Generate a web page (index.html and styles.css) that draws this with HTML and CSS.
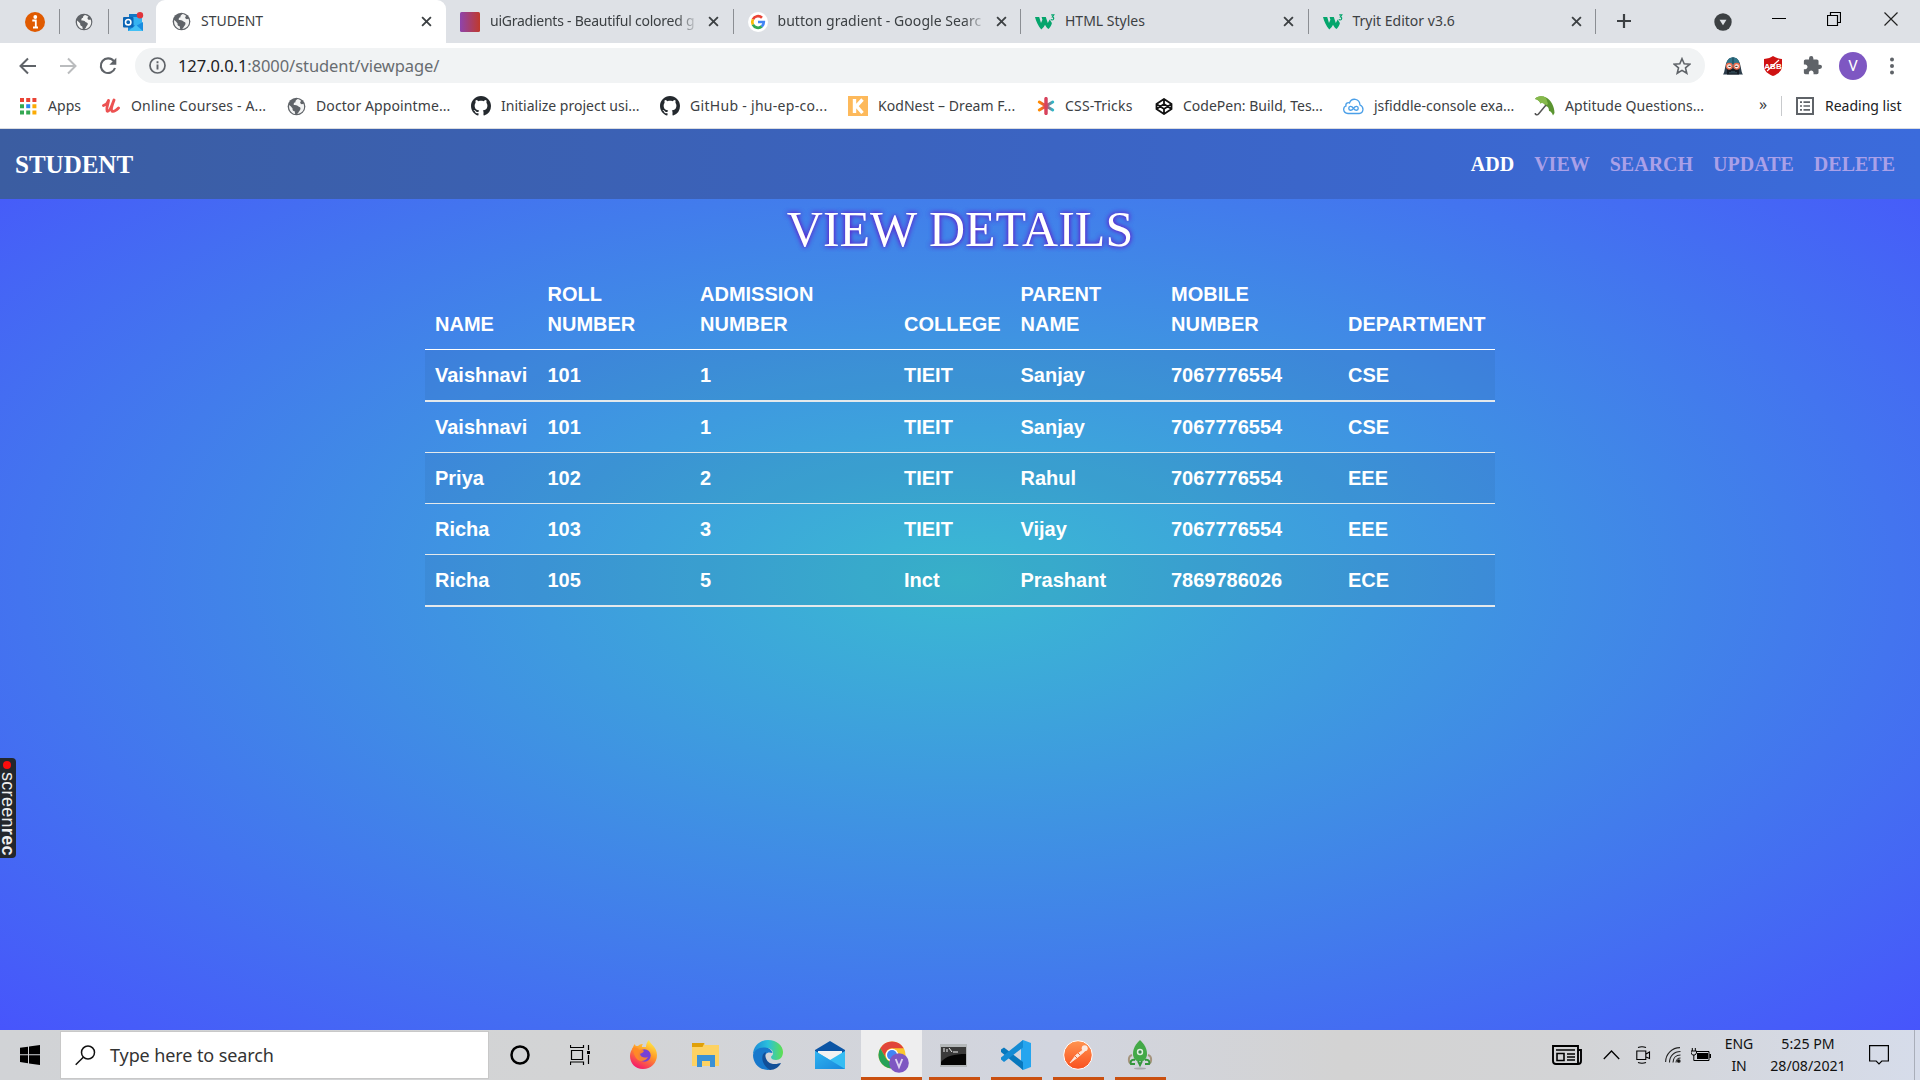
FILE: index.html
```html
<!DOCTYPE html>
<html lang="en">
<head>
<meta charset="utf-8">
<title>STUDENT</title>
<link rel="stylesheet" href="styles.css">
</head>
<body>
<svg width="0" height="0" class="defs">
  <defs>
    <linearGradient id="gUi"><stop offset="0" stop-color="#8e44ad"/><stop offset="1" stop-color="#c0392b"/></linearGradient>
    <linearGradient id="gStar"><stop offset="0" stop-color="#ff8a00"/><stop offset=".5" stop-color="#d9415d"/><stop offset="1" stop-color="#2bb8c9"/></linearGradient>
    <linearGradient id="gFox" x1=".8" y1="0" x2=".3" y2="1"><stop offset="0" stop-color="#fff14a"/><stop offset=".45" stop-color="#ff9a28"/><stop offset="1" stop-color="#f5156c"/></linearGradient>
    <linearGradient id="gEdge"><stop offset="0" stop-color="#1a8ad8"/><stop offset=".5" stop-color="#2bc0dc"/><stop offset="1" stop-color="#5fe04e"/></linearGradient>
    <linearGradient id="gMail" x1="0" y1="0" x2="1" y2="1"><stop offset="0" stop-color="#2fb4f0"/><stop offset="1" stop-color="#1787dc"/></linearGradient>
    <linearGradient id="gPost" x1="0" y1="0" x2="0" y2="1"><stop offset="0" stop-color="#ff9550"/><stop offset="1" stop-color="#f9501f"/></linearGradient>
    <symbol id="close" viewBox="0 0 12 12"><path d="M1.2 1.2l9.6 9.6M10.8 1.2l-9.6 9.6" stroke="#3c4043" stroke-width="2" fill="none"/></symbol>
    <symbol id="globe" viewBox="0 0 20 20"><circle cx="10" cy="10" r="9.3" fill="#5f6368"/><path d="M11.2 2.2C9.400 3 8.600 4.200 9 5.400 7.200 5.600 6.800 6.800 7.200 8.400c1.800.2 3.400.2 4.200 1.200.8 1 2.600.8 2.800 2.200.2 2-1.600 2.600-2.200 4.600-.2.700-.8 1.100-1.400 1.500 4.400-.2 7.400-3.600 7.400-7.600 0-1.200-.2-2.200-.7-3.200-1.200.6-2.300.6-3-.2-.7-1-.5-1.700.7-2.600-1-1-2.300-1.800-3.800-2.100zM2.300 8.300c-.8 4.600 2.200 8.900 6.200 9.500.3-1.200-.4-1.700-.4-2.900-1.700-.2-2.500-1-2.300-3.100-1-1.200-2.100-2.700-3.500-3.500z" fill="#fff" opacity=".92"/></symbol>
    <symbol id="github" viewBox="0 0 16 16"><path fill="#24292e" d="M8 0C3.580 0 0 3.580 0 8c0 3.540 2.290 6.530 5.470 7.590.4.070.55-.17.55-.38 0-.19-.01-.82-.01-1.490-2.010.37-2.530-.49-2.690-.94-.09-.23-.48-.94-.82-1.130-.28-.15-.68-.52-.01-.53.63-.01 1.080.58 1.230.82.72 1.210 1.870.87 2.330.66.07-.52.28-.87.51-1.070-1.780-.2-3.640-.89-3.640-3.950 0-.87.31-1.590.82-2.150-.08-.2-.36-1.020.08-2.120 0 0 .67-.21 2.200.82.64-.18 1.320-.27 2-.27s1.360.09 2 .27c1.530-1.040 2.200-.82 2.200-.82.44 1.100.16 1.920.08 2.120.51.56.82 1.270.82 2.150 0 3.070-1.870 3.750-3.650 3.950.29.25.54.73.54 1.480 0 1.070-.01 1.930-.01 2.200 0 .21.15.46.55.38A8.010 8.010 0 0016 8c0-4.420-3.580-8-8-8z"/></symbol>
    <symbol id="w3" viewBox="0 0 20 16"><path d="M0 3h4.200l1.800 6 1.400-3.200L6.600 3h4.200l2 6 1.900-3.500 2.200 3.500c-.3 2-1.500 4-3.300 6-1.600-1-2.700-2.400-3.600-4.300C9.300 12.300 8 14 6.300 15.400 3.200 12 1 7.500 0 3z" fill="#04a56c"/><path d="M16.200 .8h2.600L17.400 3c1.800 0 1.700 3-.2 3-.6 0-1-.2-1.300-.7" fill="none" stroke="#04a56c" stroke-width="1.200"/></symbol>
  </defs>
</svg>

<div class="screen">
  <div class="tabstrip">
    <div class="pins">
      <div class="pin"><svg width="20" height="20" viewBox="0 0 20 20"><circle cx="10" cy="10" r="10" fill="#e05a00"/><circle cx="10.300" cy="5" r="1.900" fill="#fff"/><path d="M7.300 8.500h3.500v6.300M8 15.500h5" stroke="#fff" stroke-width="1.800" fill="none"/></svg></div>
      <div class="pin"><svg width="18" height="18"><use href="#globe"/></svg></div>
      <div class="pin"><svg width="21" height="20" viewBox="0 0 21 20"><path d="M6 2h9v8H6z" fill="#1278c6"/><path d="M10 5h9v9h-9z" fill="#35b3f1"/><path d="M5 10l8 4 7-4v9H5z" fill="#1a8de0"/><path d="M5 19l8-6 7 6z" fill="#42c0f5"/><rect y="5" width="10.500" height="10.500" rx="1" fill="#0b64b5"/><circle cx="5.200" cy="10.200" r="2.700" fill="none" stroke="#fff" stroke-width="1.600"/><circle cx="17" cy="3.200" r="3.200" fill="#e0343b"/></svg></div>
    </div>
    <div class="tab active"><svg class="fav" width="19" height="19"><use href="#globe"/></svg><span class="title">STUDENT</span><svg class="x" width="11" height="11"><use href="#close"/></svg></div>
    <div class="tab"><svg class="fav" width="20" height="20"><rect width="20" height="20" rx="1.500" fill="url(#gUi)"/></svg><span class="title fade">uiGradients - Beautiful colored g</span><svg class="x" width="11" height="11"><use href="#close"/></svg></div>
    <div class="tab"><svg class="fav" width="20" height="20" viewBox="0 0 20 20"><circle cx="10" cy="10" r="10" fill="#fff"/><g fill="none" stroke-width="2.700"><path d="M4.900 7.400A5.800 5.800 0 0 1 14 5.700" stroke="#ea4335"/><path d="M4.900 12.600a5.800 5.800 0 0 1 0-5.200" stroke="#fbbc05"/><path d="M13.800 14.400a5.800 5.800 0 0 1-8.900-1.800" stroke="#34a853"/><path d="M10 10h5.800a5.800 5.800 0 0 1-2 4.400" stroke="#4285f4"/></g></svg><span class="title fade goog">button gradient - Google Searc</span><svg class="x" width="11" height="11"><use href="#close"/></svg></div>
    <div class="tab"><svg class="fav" width="20" height="16"><use href="#w3"/></svg><span class="title">HTML Styles</span><svg class="x" width="11" height="11"><use href="#close"/></svg></div>
    <div class="tab"><svg class="fav" width="20" height="16"><use href="#w3"/></svg><span class="title">Tryit Editor v3.6</span><svg class="x" width="11" height="11"><use href="#close"/></svg></div>
    <svg class="plus" width="16" height="16"><path d="M8 1v14M1 8h14" stroke="#3c4043" stroke-width="2.200"/></svg>
    <div class="winctl">
      <svg width="18" height="18"><circle cx="9" cy="9" r="8.700" fill="#3c4043"/><path d="M5.500 6.700h7L9 12.300z" fill="#dee1e6"/></svg>
      <svg width="14" height="14"><path d="M0 6.500h14" stroke="#000"/></svg>
      <svg width="14" height="14"><path d="M.5 3.500h10v10H.5zM3.500 3.500v-3h10v10h-3" fill="none" stroke="#000" stroke-width="1.200"/></svg>
      <svg width="14" height="14"><path d="M.5 .5l13 13M13.500 .5l-13 13" stroke="#222" stroke-width="1.200"/></svg>
    </div>
  </div>

  <div class="toolbar">
    <div class="navbtns">
      <svg width="18" height="18" viewBox="0 0 18 18" fill="none" stroke="#5f6368" stroke-width="2"><path d="M17 9H2M9 1.500L1.500 9 9 16.500"/></svg>
      <svg width="18" height="18" viewBox="0 0 18 18" fill="none" stroke="#babcbe" stroke-width="2"><path d="M1 9h15M9 1.500L16.500 9 9 16.500"/></svg>
      <svg width="18" height="18" viewBox="0 0 18 18"><path d="M14.800 4.200A7.300 7.300 0 1 0 16 11" fill="none" stroke="#5f6368" stroke-width="2.100"/><path d="M17.300.8v7h-7z" fill="#5f6368"/></svg>
    </div>
    <div class="omni">
      <svg width="17" height="17" viewBox="0 0 17 17"><circle cx="8.500" cy="8.500" r="7.500" fill="none" stroke="#5f6368" stroke-width="1.700"/><path d="M8.500 7.500v5M8.500 4.300v1.900" stroke="#5f6368" stroke-width="1.900"/></svg>
      <span class="url"><b>127.0.0.1</b>:8000/student/viewpage/</span>
      <svg width="18" height="18" viewBox="0 0 18 18"><path d="M9 1.700l2.200 5.100 5.500.5-4.200 3.600 1.300 5.400L9 13.400l-4.800 2.900 1.300-5.400L1.300 7.300l5.500-.5z" fill="none" stroke="#5f6368" stroke-width="1.600"/></svg>
    </div>
    <div class="exts">
      <svg width="20" height="20" viewBox="0 0 20 20"><path d="M0 18.500C3 15 1 1.500 10 1.500s7 13.500 10 17z" fill="#2d3e4c"/><path d="M3.500 9C3.500 4 6 1.500 10 1.500S16.500 4 16.500 9z" fill="#2f7489"/><path d="M9 1.500h2V8H9z" fill="#255a6c"/><path d="M4 13h12v5.500H4z" fill="#151c24"/><circle cx="6.300" cy="10.300" r="2.800" fill="#fff3ee" stroke="#ee6c4c" stroke-width="1.300"/><circle cx="13.700" cy="10.300" r="2.800" fill="#fff3ee" stroke="#ee6c4c" stroke-width="1.300"/><path d="M5.500 10.300h2.200M12.300 10.300h2.200" stroke="#444" stroke-width="1.300"/><path d="M7 16v1.500M9 15v2.500M11 15v2.500M13 16v1.500" stroke="#456877"/></svg>
      <svg width="20" height="20" viewBox="0 0 20 20"><path d="M10 0c2 1.500 5 2.500 9 3V10c0 5-4 8-9 10-5-2-9-5-9-10V3c4-.5 7-1.500 9-3z" fill="#cf1212"/><text x="10" y="12.800" class="abp">ABB</text><path d="M4 15L16 4" stroke="#fff" stroke-width="1.200"/></svg>
      <svg class="puzzle" width="19" height="19" viewBox="1 1 22 22"><path fill="#5f6368" d="M20.500 11H19V7c0-1.100-.9-2-2-2h-4V3.500a2.500 2.500 0 0 0-5 0V5H4c-1.100 0-1.990.9-1.990 2v3.800H3.500c1.490 0 2.700 1.210 2.700 2.700s-1.210 2.700-2.700 2.700H2V20c0 1.100.9 2 2 2h3.800v-1.500c0-1.490 1.210-2.700 2.700-2.700s2.700 1.210 2.700 2.700V22H17c1.100 0 2-.9 2-2v-4h1.500a2.500 2.500 0 0 0 0-5z"/></svg>
      <span class="avatar">V</span>
      <svg width="6" height="18" fill="#5f6368"><circle cx="3" cy="2.500" r="2"/><circle cx="3" cy="9" r="2"/><circle cx="3" cy="15.500" r="2"/></svg>
    </div>
  </div>

  <div class="bookmarks">
    <a class="bm apps"><svg width="17" height="17"><g fill="#ea4335"><path d="M0 0h4v4H0zM6.200 0h4v4H6.200z"/><path d="M12.400 0h4v4h-4z"/></g><path d="M0 6.200h4v4H0zM0 12.400h4v4H0zM6.200 12.400h4v4H6.200z" fill="#34a853"/><path d="M6.200 6.200h4v4H6.200z" fill="#2a85f5"/><path d="M12.400 6.200h4v4h-4zM12.400 12.400h4v4h-4z" fill="#fbab05"/></svg><span>Apps</span></a>
    <a class="bm udemy"><svg width="19" height="16" viewBox="0 0 19 16"><path d="M1.500 7.500C4 6.500 6 4.500 6.500 2.500 6 6 3.500 12.500 5.500 13.200 8 13.500 10.500 6 12 2c-1.500 4-3.500 10.500-1.500 11.300 2 .6 4-1.300 6-3.300" fill="none" stroke="#ec5252" stroke-width="2.900" stroke-linecap="round" stroke-linejoin="round"/></svg><span>Online Courses - A...</span></a>
    <a class="bm doctor"><svg width="19" height="19"><use href="#globe"/></svg><span>Doctor Appointme...</span></a>
    <a class="bm init"><svg width="20" height="20"><use href="#github"/></svg><span>Initialize project usi...</span></a>
    <a class="bm jhu"><svg width="20" height="20"><use href="#github"/></svg><span>GitHub - jhu-ep-co...</span></a>
    <a class="bm kod"><svg width="20" height="20"><path d="M0 0h20v20H0z" fill="#fdb95b"/><path d="M6.500 3v14M14.500 3.500L8.500 10l6 7" stroke="#fff" stroke-width="3.400" fill="none"/></svg><span>KodNest – Dream F...</span></a>
    <a class="bm tricks"><svg width="18" height="18"><path d="M9 1.500v15M2.300 5l13.400 8M15.700 5L2.300 13" stroke="url(#gStar)" stroke-width="3" stroke-linecap="round"/><path d="M9.010 1.500L9 16.500" stroke="#d9415d" stroke-width="3" stroke-linecap="round"/></svg><span>CSS-Tricks</span></a>
    <a class="bm pen"><svg width="18" height="17" viewBox="0 0 18 17"><path d="M9 1l7.500 5v5L9 16 1.500 11V6zM9 1v5M9 11v5M1.500 6L9 11l7.500-5M1.500 11L9 6l7.500 5" fill="none" stroke="#111" stroke-width="1.800"/></svg><span>CodePen: Build, Tes...</span></a>
    <a class="bm fiddle"><svg width="21" height="17" viewBox="0 0 21 17"><path d="M5 15.500C-.5 15-.2 9 3 8 2.200 5.500 5 3.800 6.500 5 8.500-.5 16.500 0 17 7c4.500 2 3.500 8.200-.8 8.500z" fill="none" stroke="#4a9fe8" stroke-width="1.300"/><path d="M10.500 10.300C8.500 7.500 5.800 8 5.800 10.300s2.700 2.800 4.700 0 4.700-2.300 4.700 0-2.700 2.800-4.700 0z" fill="none" stroke="#4a9fe8" stroke-width="1.400"/></svg><span>jsfiddle-console exa...</span></a>
    <a class="bm apt"><svg width="21" height="20" viewBox="0 0 21 20"><path d="M1 3C3 0 8-.5 12 1.500c5 2.500 8.500 9 8.500 15.500l-1.500 2.500c-1-3-2.500-4.500-4-4.500 0-3-1-4.500-3.500-5C10.500 7.500 9 6.500 6.500 7.500 5.500 5 3.500 3.500 1 3z" fill="#5a9430"/><path d="M1 3C3 0 8-.5 12 1.500L14 8l-2.500 2C10.500 7.500 9 6.500 6.500 7.500 5.500 5 3.500 3.500 1 3z" fill="#86b94b"/><path d="M12 9L4.500 18c-1.200 1.500-3.500.8-3.200-1" fill="none" stroke="#555" stroke-width="1.500"/></svg><span>Aptitude Questions...</span></a>
    <span class="more">»</span>
    <a class="reading"><svg width="18" height="18"><path d="M1 1h16v16H1z" fill="none" stroke="#5f6368" stroke-width="2"/><path d="M4 5.200h2M4 9h2M4 12.800h2M7.500 5.200H14M7.500 9H14M7.500 12.800H14" stroke="#5f6368" stroke-width="1.700"/></svg><span>Reading list</span></a>
  </div>

  <main class="page">
    <nav class="navbar">
      <a class="brand">STUDENT</a>
      <div class="links"><a class="current">ADD</a><a>VIEW</a><a>SEARCH</a><a>UPDATE</a><a>DELETE</a></div>
    </nav>
    <h1>VIEW DETAILS</h1>
    <table class="students">
      <colgroup><col class="c-name"><col class="c-roll"><col class="c-adm"><col class="c-col"><col class="c-par"><col class="c-mob"><col class="c-dep"></colgroup>
      <thead><tr><th>NAME</th><th>ROLL<br>NUMBER</th><th>ADMISSION<br>NUMBER</th><th>COLLEGE</th><th>PARENT<br>NAME</th><th>MOBILE<br>NUMBER</th><th>DEPARTMENT</th></tr></thead>
      <tbody>
        <tr class="thick"><td>Vaishnavi</td><td>101</td><td>1</td><td>TIEIT</td><td>Sanjay</td><td>7067776554</td><td>CSE</td></tr>
        <tr><td>Vaishnavi</td><td>101</td><td>1</td><td>TIEIT</td><td>Sanjay</td><td>7067776554</td><td>CSE</td></tr>
        <tr><td>Priya</td><td>102</td><td>2</td><td>TIEIT</td><td>Rahul</td><td>7067776554</td><td>EEE</td></tr>
        <tr><td>Richa</td><td>103</td><td>3</td><td>TIEIT</td><td>Vijay</td><td>7067776554</td><td>EEE</td></tr>
        <tr class="thick"><td>Richa</td><td>105</td><td>5</td><td>Inct</td><td>Prashant</td><td>7869786026</td><td>ECE</td></tr>
      </tbody>
    </table>
  </main>

  <footer class="taskbar">
    <div class="start"><svg width="20" height="20"><path d="M0 2.800L8 1.700v7.600H0zM9 1.500L20 0v9.300H9zM0 10.300h8v7.900L0 17.100zM9 10.300h11V20L9 18.400z"/></svg></div>
    <div class="search"><svg width="21" height="21"><circle cx="13" cy="7.500" r="6.500" fill="none" stroke="#111" stroke-width="1.500"/><path d="M8.300 12.200L.7 19.800" stroke="#111" stroke-width="1.500"/></svg><span>Type here to search</span></div>
    <div class="task"><svg width="20" height="20"><circle cx="10" cy="10" r="8.500" fill="none" stroke="#000" stroke-width="2.500"/></svg></div>
    <div class="task view"><svg width="21" height="20"><path d="M1.500 5.500h11v9h-11zM.5 0v2.500h13V0M.5 20v-3h13v3M18.500 0v5M18.500 10v9" fill="none" stroke="#000" stroke-width="1.200"/><path d="M17 6h3v3h-3z"/></svg></div>
    <div class="task"><svg width="30" height="30" viewBox="0 0 30 30"><path d="M4 8c0-2 1-3 2-4 0 2 1 2 3 2 2-2 4-2 5-2-1 1-1 2-1 3l4 0c0-3 1-5 3-7 1 4 8 7 8 15 0 8-6 14-14 14S1 23 1 16c0-3 1-6 3-8z" fill="url(#gFox)"/><circle cx="15.500" cy="15.500" r="6.200" fill="#7541d6"/><path d="M3 8c4-1 6 0 7 2 2-1 4 0 5 1-1 2-3 2-4 3 1 4 5 4 8 3-2 4-7 5-10 3-4-3-4-8-6-12z" fill="#ff8b26" opacity=".9"/></svg></div>
    <div class="task"><svg width="30" height="26" viewBox="0 0 30 26"><path d="M1 1h12l1 2h14v21H1z" fill="#fdd263"/><path d="M1 1h12.500l-2 4H1z" fill="#e0a008"/><path d="M6 25V13h18v12h-5v-6h-8v6z" fill="#3a91d6"/></svg></div>
    <div class="task"><svg width="30" height="30" viewBox="0 0 30 30"><path d="M15 0c9 0 15 6 15 12 0 5-3 8-7 8-3 0-5-1-5-3 0-1 2-1 2-4 0-3-3-5-7-5C7 8 1 11 0 15 0 6 7 0 15 0z" fill="url(#gEdge)"/><path d="M0 15C1 10 6 7 12 7.500c4 0 7 3 7.500 5.500-6-2-9 2-8 8 1 4 3 8 7 8.500C8 32 0 24 0 15z" fill="#1778cc"/><path d="M13 12c-5 1-6 12 4 18 5 0 9-3 11-7-2 0-4 1.500-8 1-6-1-9-7-7-12z" fill="#114f98"/></svg></div>
    <div class="task"><svg width="30" height="28" viewBox="0 0 30 28"><path d="M0 9L15 0l15 9v6H0z" fill="#0b55a5"/><path d="M3 10h24v10H3z" fill="#f2f2f2"/><path d="M0 10l15 9 15-9v18H0z" fill="#35bdf3"/><path d="M0 10l30 18H0z" fill="url(#gMail)"/></svg></div>
    <div class="task open chrome"><svg width="32" height="32" viewBox="0 0 32 32"><circle cx="15" cy="14" r="13.500" fill="#fbc62e"/><path d="M3.300 7.250A13.500 13.500 0 0 1 26.700 7.250H15a7 7 0 0 0-6 10z" fill="#e1453a"/><path d="M3.300 7.250l5.700 10a7 7 0 0 0 6 3.750l-1 6.500A13.500 13.500 0 0 1 3.300 7.250z" fill="#27a258"/><circle cx="15" cy="14" r="6.300" fill="#fff"/><circle cx="15" cy="14" r="5" fill="#4285f4"/><circle cx="22" cy="22" r="9.800" fill="#7e57c2"/><path d="M18.700 18l3.300 8 3.300-8" fill="none" stroke="#ddd1f1" stroke-width="1.900"/></svg></div>
    <div class="task open cmd"><svg width="29" height="25" viewBox="0 0 29 25"><path d="M1 1h27v23H1z" fill="#b4b8ba"/><path d="M2 4h25v18H2z" fill="#050505"/><path d="M2 4h25v7C15 11 7 13 2 19z" fill="#3a3a3a"/><path d="M4 6h2M4 8h2M8 6v3M10 5l3 4M14 9h5" stroke="#eee" stroke-width="1"/></svg></div>
    <div class="task open"><svg width="30" height="30" viewBox="0 0 30 30"><path d="M22 0l8 3v24l-8 3-2-2V2z" fill="#25a5ef"/><path d="M0 9.500L3 7.500l19 14.500v8L0 12z" fill="#0878bd"/><path d="M0 19.500L3 22l19-14.500V0L0 17.500z" fill="#148bd4"/></svg></div>
    <div class="task open"><svg width="30" height="30" viewBox="0 0 30 30"><circle cx="15" cy="15" r="14.300" fill="url(#gPost)" stroke="#fff" stroke-width="1"/><circle cx="21.700" cy="8.300" r="3" fill="#fbe9df"/><path d="M20 10l1.500 1.500-6.500 5.500-8 6 6-8z" fill="#fbe9df" stroke="#fbe9df" stroke-width=".8"/><path d="M12 16l2 2M15 13l2 2" stroke="#f26d31"/></svg></div>
    <div class="task open"><svg width="26" height="30" viewBox="0 0 26 30"><ellipse cx="13" cy="28.500" rx="6" ry="1" fill="#a9a9ad"/><path d="M5 15c-4 1-4 7-1 9M21 15c4 1 4 7 1 9" fill="none" stroke="#a5947d" stroke-width="2"/><path d="M13 0c4 4 7 8 7 14 0 4-3 7-4 7h-6c-1 0-4-3-4-7C6 8 9 4 13 0z" fill="#43a947"/><circle cx="13" cy="12" r="3.200" fill="#e0f0df"/><circle cx="13" cy="12" r="1.700" fill="#39884b"/><path d="M8 20c-4-1-5 2-4 4h4M18 20c4-1 5 2 4 4h-4M11 21l2 4 2-4" fill="none" stroke="#34963d" stroke-width="2"/></svg></div>
    <div class="tray">
      <svg class="news" width="30" height="20" viewBox="0 0 30 20" fill="none" stroke="#000"><path d="M1 1h25v18H4c-2 0-3-1-3-3zM26 5h3v11c0 2-1 3-3 3" stroke-width="1.900"/><path d="M5 8.500h7v7H5zM4 5h19M15 9h8M15 12h8M15 15h8" stroke-width="1.600"/></svg>
      <svg class="chev" width="17" height="10"><path d="M.8 9L8.500 1l7.700 8" fill="none" stroke="#000" stroke-width="1.300"/></svg>
      <svg class="meet" width="15" height="18" fill="none" stroke="#000" stroke-width="1.100"><path d="M.8 5h9v8.500h-9zM10 8l3.500-2v6.500L10 11M2 1.500Q6 0 10 1.500M2 16.500Q6 18 10 16.500"/></svg>
      <svg class="wifi" width="16" height="16" fill="none" stroke="#222" stroke-width="1.100"><path d="M.6 15C.6 7 7 .6 15 .6M4.500 15.500C4.500 9 9 4.500 15.500 4.500M8 15.500C8 11 11 8 15.500 8M11 15.500c0-2.500 2-4.500 4.500-4.500"/><circle cx="13.800" cy="14" r="1.300" fill="#000"/></svg>
      <svg class="batt" width="20" height="14"><path d="M5 3.500h13v9H4.500" fill="none" stroke="#000"/><path d="M6 5h11v6H6zM18.500 6H20v4h-1.500z"/><path d="M1.300 0v3M4.300 0v3M0 3h5.500v2L4 7H1.500L0 5zM2.800 7v5.500H5" fill="none" stroke="#000"/></svg>
      <div class="lang">ENG<br>IN</div>
      <div class="clock">5:25 PM<br>28/08/2021</div>
      <svg class="note" width="20" height="20"><path d="M.6 .6h18.800V16h-6.600l-2.800 2.800L7.200 16H.6z" fill="none" stroke="#000" stroke-width="1.200"/></svg>
    </div>
  </footer>
  <div class="recorder"><i></i><span>screen<b>rec</b></span></div>
</div>
</body>
</html>
```
FILE: styles.css
```css
* { box-sizing: border-box; }
body { margin: 0; font-family: "Noto Sans", "Open Sans", sans-serif; }
svg { display: block; flex: none; }
.defs { position: absolute; }
.screen { position: relative; width: 1920px; height: 1080px; display: flex; flex-direction: column; overflow: hidden; }

/* Tab strip */
.tabstrip { height: 43px; background: #dee1e6; display: flex; align-items: stretch; flex: none; }
.pins { display: flex; width: 158px; padding-left: 11px; align-items: center; }
.pin { width: 49px; height: 25px; display: flex; align-items: center; justify-content: center; border-right: 1px solid #8b8e93; }
.pin:last-child { border: 0; }
.tab { width: 287.500px; padding-left: 14px; display: flex; align-items: center; position: relative; font-size: 14px; color: #3c4043; }
.tab::after { content: ""; position: absolute; right: 0; top: 9px; height: 25px; width: 1px; background: #8b8e93; }
.tab.active { background: #fff; border-radius: 9px 9px 0 0; width: 290px; margin-left: -2px; padding-left: 16px; }
.tab.active::after { display: none; }
.title { width: 211px; margin-left: 10px; margin-right: 7px; white-space: nowrap; letter-spacing: 0; line-height: 24px; margin-top: -2px; }
.active .title { width: 213px; }
.fade { letter-spacing: -.25px; -webkit-mask-image: linear-gradient(90deg, #000 88%, transparent 99%); mask-image: linear-gradient(90deg, #000 88%, transparent 99%); }
.goog { letter-spacing: .05px; }
.plus { margin: 13px 0 0 20px; }
.winctl { display: flex; margin-left: auto; padding: 0 22px 0 0; gap: 42px; align-items: center; }
.winctl svg:first-child { margin-right: -2px; }
.winctl svg:nth-child(2) { margin-right: -1px; }
.winctl svg:nth-child(3) { margin-right: 1px; }
.winctl svg:not(:first-child) { margin-top: -6px; }

/* Toolbar */
.toolbar { height: 45px; background: #fff; display: flex; align-items: center; flex: none; }
.navbtns { display: flex; gap: 22px; width: 135px; padding-left: 19px; }
.omni { width: 1570px; height: 35px; border-radius: 18px; background: #f1f3f4; display: flex; align-items: center; padding: 0 14px; }
.url { flex: 1; margin-left: 12px; font-size: 16.500px; color: #686c70; letter-spacing: -.07px; }
.url b { color: #202124; font-weight: 400; }
.exts { display: flex; align-items: center; gap: 20px; padding-left: 18px; }
.avatar { width: 28px; height: 28px; border-radius: 50%; background: #7e57c2; color: #fff; font: 15px/28px Roboto, sans-serif; text-align: center; margin: 0 2px 0 -3px; }
.abp { font: bold 8px "Liberation Sans", sans-serif; fill: #fff; text-anchor: middle; }

/* Bookmarks */
.bookmarks { height: 41px; background: #fff; border-bottom: 1px solid #dadce0; display: flex; align-items: center; padding: 0 18px 4px 20px; font-size: 14px; color: #3c4043; flex: none; }
.bm { display: flex; align-items: center; white-space: nowrap; letter-spacing: .05px; }
.bm span, .reading span { margin-left: 10px; margin-top: -2px; }
.apps { width: 82px; }
.apps span { margin-left: 11px; }
.udemy { width: 185px; letter-spacing: .15px; }
.doctor { width: 184px; letter-spacing: .1px; }
.init { width: 189px; letter-spacing: 0; }
.jhu { width: 188px; letter-spacing: .3px; }
.kod { width: 189px; }
.tricks { width: 118px; letter-spacing: .2px; }
.pen { width: 188px; letter-spacing: 0; }
.fiddle { width: 191px; letter-spacing: 0; }
.apt { width: 225px; }
.more { width: 22px; font-size: 16px; color: #3c4043; line-height: 20px; margin-top: -5px; }
.reading { display: flex; align-items: center; border-left: 1px solid #c8cacd; height: 20px; padding-left: 14px; color: #202124; letter-spacing: 0; white-space: nowrap; }
.reading span { margin-left: 11px; }

/* Page */
.page { flex: 1; background: radial-gradient(ellipse at 50% 50%, #3abad2 0%, #4755fc 100%); display: flex; flex-direction: column; align-items: center; }
.navbar { align-self: stretch; height: 70px; background: linear-gradient(90deg, #3b5da1, #3b64c3 55%, #3b6bdc); display: flex; align-items: center; justify-content: space-between; padding: 1px 25px 0 15px; font-family: "Liberation Serif", serif; font-weight: 700; }
.brand { font-size: 25px; color: #fff; }
.links { display: flex; gap: 20px; font-size: 20px; color: #aaa0e8; }
.current { color: #fff; }
h1 { margin: 0; font: 400 50px/60px "Liberation Serif", serif; color: #fff; text-shadow: 0 0 5px #5a20c8, 0 0 5px #5b38d8; height: 70px; }
.students { table-layout: fixed; width: 1070px; border-collapse: separate; border-spacing: 0; font: bold 20px/30px "Liberation Sans", sans-serif; color: #fff; text-align: left; }
.c-name { width: 112.500px; }
.c-roll { width: 152.500px; }
.c-adm { width: 204px; }
.c-col { width: 116.500px; }
.c-par { width: 150.500px; }
.c-mob { width: 177px; }
.c-dep { width: 157px; }
.students th { padding: 10px; vertical-align: bottom; border-bottom: 1px solid #fff; white-space: nowrap; }
.students td { padding: 10px; border-bottom: 1px solid #e4e9ec; }
.students .thick td { border-bottom-width: 2px; }
.students tbody tr:nth-child(odd) { background: rgba(30, 70, 90, .08); }

/* Taskbar */
.taskbar { height: 50px; flex: none; display: flex; background: linear-gradient(90deg, #d1d3d6, #d3d4d5 30%, #d2d5df 55%, #d3d3d3 70%, #d3d4d6 82%, #d6dcea); }
.start { width: 60px; display: flex; align-items: center; justify-content: center; }
.search { width: 429px; margin: 1px 0; background: #fff; outline: 1px solid #c8c8c8; outline-offset: -1px; display: flex; align-items: center; padding-left: 15px; color: #333; }
.search span { margin-left: 14px; font-size: 18px; letter-spacing: -.1px; margin-top: -1px; }
.task { width: 62px; display: flex; align-items: center; justify-content: center; position: relative; }
.view svg { margin-right: 3px; }
.open::after { content: ""; position: absolute; left: 6px; width: 51px; bottom: 0; height: 3px; background: #ca5010; }
.chrome { background: #eeeeef; margin-right: 1px; width: 61px; }
.chrome svg { margin: 3px 0 0 3px; }
.chrome::after { left: 0; width: 61px; }
.cmd svg { margin-right: 2px; }
.tray { margin-left: auto; width: 368px; display: flex; align-items: center; position: relative; color: #111; }
.tray::after { content: ""; position: absolute; right: 5px; top: 0; bottom: 0; width: 1px; background: #a9aeb9; }
.chev { margin-left: 21px; }
.meet { margin-left: 16px; }
.wifi { margin-left: 14px; }
.batt { margin-left: 10px; }
.lang, .clock { font-size: 14px; line-height: 22px; text-align: center; letter-spacing: -.1px; }
.lang { width: 56px; }
.clock { width: 82px; letter-spacing: 0; margin-right: 1px; font-size: 14.200px; }
.note { margin-left: 19px; }

/* Recorder handle docked at the left edge */
.recorder { position: absolute; left: 0; top: 758px; width: 16px; height: 100px; background: #23272c; border-radius: 0 4px 4px 0; color: #eee; padding-top: 3px; }
.recorder i { display: block; width: 8px; height: 8px; border-radius: 50%; background: #fb0d0d; margin-left: 3px; }
.recorder span { display: block; writing-mode: vertical-rl; font: 18px/16px "Liberation Sans", sans-serif; width: 16px; margin-top: 3px; letter-spacing: .3px; white-space: nowrap; }
```
